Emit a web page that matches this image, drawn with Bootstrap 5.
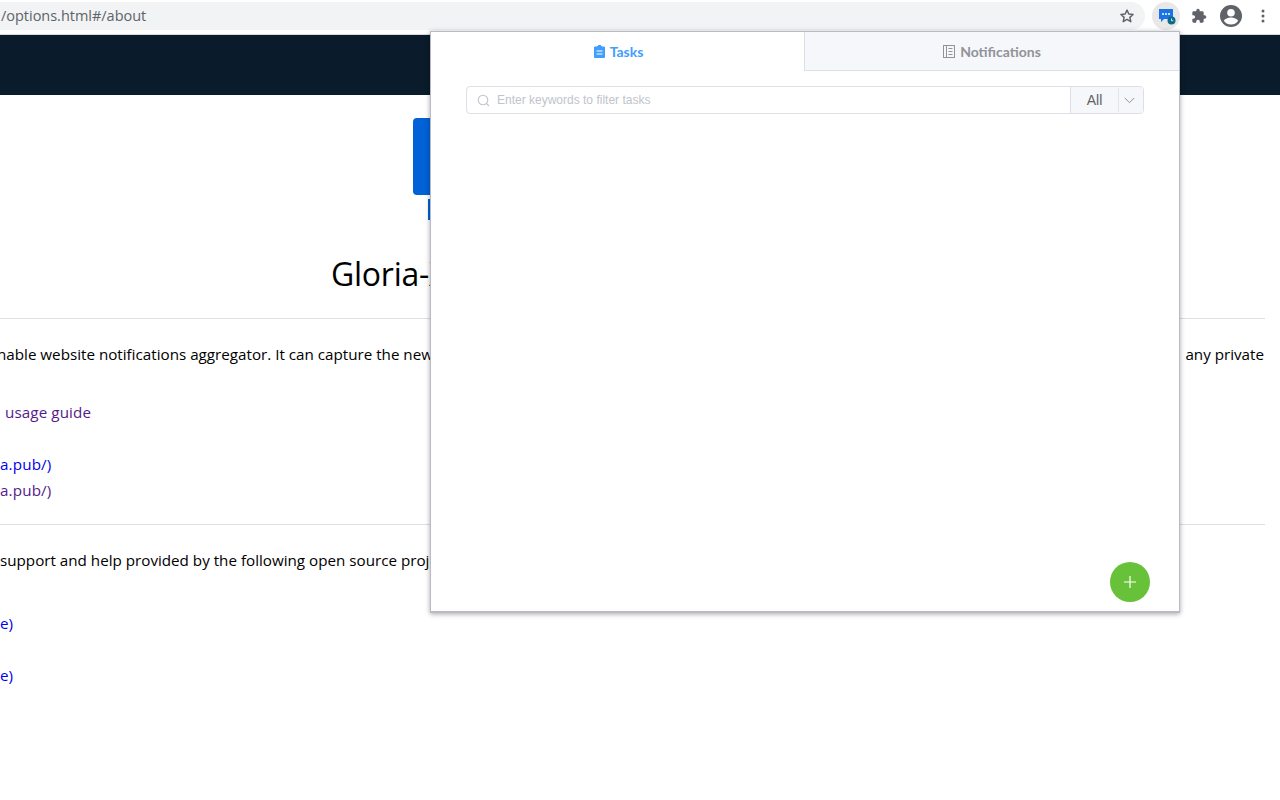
<!DOCTYPE html>
<html lang="en">
<head>
<meta charset="utf-8">
<title>Gloria-X</title>
<link href="https://cdn.jsdelivr.net/npm/bootstrap@5.3.0/dist/css/bootstrap.min.css" rel="stylesheet">
<style>
html,body{height:100%;margin:0;overflow:hidden;background:#fff}
body{font-family:"Open Sans","Noto Sans",sans-serif;color:#000;position:relative;width:1280px;height:800px}
.chrome-bar{height:35px;border-bottom:1px solid #d9dadc;padding-top:2px}
.omni{width:1145px;flex:none;height:28px;background:#f1f3f4;border-radius:0 14px 14px 0;padding-left:1px;padding-right:10px}
.omni-url{font-size:14.5px;color:#5f6368;line-height:28px;font-family:"Open Sans",sans-serif;letter-spacing:-.02px}
.tool-icons{margin-left:7px;flex:none}
.ext-btn{width:28px;height:28px;border-radius:50%;background:#e8e8e8;margin-right:3px;padding-left:2px}
.slot{width:32px}
.dark-bar{height:60px;background:#0a1b2b}
.logo-wrap{padding-top:23px;padding-left:413px;height:166px}
.logo-main{width:120px;height:77px;background:#0062d6;border-radius:4px}
.logo-tail{width:40px;height:21px;background:#0062d6;margin:4px 0 0 15px}
.main-title{font-size:32px;line-height:40px;padding-left:331px;margin:-7px 0 0;font-weight:400;height:64px;padding-top:0;letter-spacing:-.25px}
.rule{height:1px;background:#dcdfe6;width:1265px;opacity:1;margin:0;border:0}
.line{font-size:15.2px;line-height:26px;white-space:nowrap;width:1264px}
.first-line{margin-top:22px}
.gap32{margin-top:32px}
.gap26{margin-top:26px}
.gap21{margin-top:21px}
.gap22{margin-top:22px}
.gap37{margin-top:37px}
.clip-left{margin-left:-3px}
.visited{color:#551a8b;text-decoration:none}
.fresh{color:#0000ee;text-decoration:none}
.link-pub{letter-spacing:.15px}
.guide{letter-spacing:.1px;padding-left:1px}
.popup{position:absolute;left:430px;top:31px;width:750px;height:582px;background:#fff;border:1px solid #b9bac4;border-width:1px 1px 2px 1px;box-shadow:0 1px 5px rgba(0,0,0,.35)}
.tab-row{height:39px}
.pop-tab{height:39px;font-family:Lato,sans-serif;font-size:14px;font-weight:700;gap:5px}
.tab-on{color:#409eff;background:#fff;width:373px;padding-left:2px}
.tab-off{color:#909399;background:#f5f7fa;border-left:1px solid #dcdfe6;border-bottom:1px solid #dcdfe6;flex:1}
.filter-box{margin:15px 35px 0;height:28px;border:1px solid #dcdfe6;border-radius:4px;width:678px}
.search-part{flex:1;padding-left:10px;gap:7px}
.hint{font-family:"Liberation Sans",sans-serif;font-size:12px;color:#c0c4cc}
.select-part{width:73px;flex:none;background:#f5f7fa;border-left:1px solid #dcdfe6;border-radius:0 4px 4px 0}
.sel-text{width:47px;text-align:center;font-size:14px;font-family:"Liberation Sans",sans-serif;color:#606266}
.sel-caret{flex:1;height:24px;border-left:1px solid #e4e7ed;padding-right:3px}
.fab{position:absolute;left:679px;top:530px;width:40px;height:40px;border-radius:50%;background:#67c23a}
</style>
</head>
<body>
<div class="chrome-bar">
  <div class="d-flex align-items-center">
    <div class="omni d-flex align-items-center justify-content-between">
      <span class="omni-url">/options.html#/about</span>
      <svg width="16" height="16" viewBox="0 0 24 24" fill="none" stroke="#5f6368" stroke-width="2.2" stroke-linejoin="round"><path d="M12 3.2l2.7 5.9 6.4.7-4.8 4.3 1.4 6.4L12 17.1l-5.7 3.4 1.4-6.4-4.8-4.3 6.4-.7z"/></svg>
    </div>
    <div class="tool-icons d-flex align-items-center">
      <div class="ext-btn d-flex align-items-center justify-content-center">
        <svg width="18" height="18" viewBox="0 0 18 18"><path d="M1 2h14v10H6l-3 3v-3H1z" fill="#1a73e8"/><circle cx="5" cy="7" r="1" fill="#fff"/><circle cx="8" cy="7" r="1" fill="#fff"/><circle cx="11" cy="7" r="1" fill="#fff"/><circle cx="13.5" cy="13.5" r="4" fill="#0b6b8c"/><path d="M13.5 11.5v2.2h1.8" stroke="#fff" stroke-width=".8" fill="none"/></svg>
      </div>
      <div class="slot d-flex justify-content-center">
        <svg width="16" height="16" viewBox="0 0 24 24"><path fill="#5f6368" d="M20.5 11H19V7c0-1.1-.9-2-2-2h-4V3.5a2.5 2.5 0 0 0-5 0V5H4c-1.1 0-2 .9-2 2v3.8h1.5a2.7 2.7 0 0 1 0 5.400H2V20c0 1.100.9 2 2 2h3.800v-1.500a2.700 2.700 0 0 1 5.400 0V22H17c1.100 0 2-.9 2-2v-4h1.500a2.500 2.500 0 0 0 0-5z"/></svg>
      </div>
      <div class="slot d-flex justify-content-center">
        <svg width="24" height="24" viewBox="0 0 24 24"><path fill="#5f6368" d="M12 1a11 11 0 1 0 0 22 11 11 0 0 0 0-22zm0 4a3.800 3.800 0 1 1 0 7.600A3.800 3.800 0 0 1 12 5zm0 15.600a8.600 8.600 0 0 1-7-3.600c.1-2.300 4.700-3.600 7-3.600s6.900 1.300 7 3.600a8.600 8.600 0 0 1-7 3.600z"/></svg>
      </div>
      <div class="slot d-flex justify-content-center">
        <svg width="4" height="14" viewBox="0 0 4 14"><circle cx="2" cy="2" r="1.500" fill="#5f6368"/><circle cx="2" cy="7" r="1.500" fill="#5f6368"/><circle cx="2" cy="12" r="1.500" fill="#5f6368"/></svg>
      </div>
    </div>
  </div>
</div>
<div class="dark-bar"></div>
<div class="logo-wrap">
  <div class="logo-main"></div>
  <div class="logo-tail"></div>
</div>
<h1 class="main-title">Gloria-X</h1>
<hr class="rule">
<div class="line first-line d-flex justify-content-between"><span class="clip-left">nable website notifications aggregator. It can capture the new</span><span>any private</span></div>
<div class="line gap32"><a class="visited guide" href="#">&nbsp;usage guide</a></div>
<div class="line gap26"><a class="fresh link-pub" href="#">a.pub/)</a></div>
<div class="line"><a class="visited link-pub" href="#">a.pub/)</a></div>
<hr class="rule gap21">
<div class="line gap22">support and help provided by the following open source proj</div>
<div class="line gap37"><a class="fresh" href="#">e)</a></div>
<div class="line gap26"><a class="fresh" href="#">e)</a></div>

<div class="popup">
  <div class="tab-row d-flex">
    <div class="pop-tab tab-on d-flex align-items-center justify-content-center">
      <svg width="11" height="13" viewBox="0 0 11 13"><path fill="#409eff" d="M1 1.500h2V1h1V0h3v1h1v.500h2a1 1 0 0 1 1 1V12a1 1 0 0 1-1 1H1a1 1 0 0 1-1-1V2.500a1 1 0 0 1 1-1z"/><path stroke="#fff" d="M2.500 6h6M2.500 9h6"/></svg>
      <span>Tasks</span>
    </div>
    <div class="pop-tab tab-off d-flex align-items-center justify-content-center">
      <svg width="12" height="13" viewBox="0 0 12 13" fill="none" stroke="#909399"><rect x=".5" y=".5" width="11" height="12"/><path d="M3.500 1v11M5.500 3.500h4M5.500 6.500h4M5.500 9.500h4"/></svg>
      <span>Notifications</span>
    </div>
  </div>
  <div class="filter-box d-flex">
    <div class="search-part d-flex align-items-center">
      <svg width="13" height="13" viewBox="0 0 13 13" fill="none" stroke="#c0c4cc" stroke-width="1.100"><circle cx="6" cy="6" r="4.800"/><path d="M9.500 9.500l2.500 2.500"/></svg>
      <span class="hint">Enter keywords to filter tasks</span>
    </div>
    <div class="select-part d-flex align-items-center">
      <span class="sel-text">All</span>
      <div class="sel-caret d-flex align-items-center justify-content-center">
        <svg width="11" height="7" viewBox="0 0 11 7" fill="none" stroke="#909399"><path d="M.8 1l4.700 4.700L10.200 1"/></svg>
      </div>
    </div>
  </div>
  <div class="fab d-flex align-items-center justify-content-center">
    <svg width="12" height="12" viewBox="0 0 12 12"><path stroke="#fff" stroke-width="1.200" d="M6 0v12M0 6h12"/></svg>
  </div>
</div>
<script src="https://cdn.jsdelivr.net/npm/bootstrap@5.3.0/dist/js/bootstrap.bundle.min.js"></script>
</body>
</html>
